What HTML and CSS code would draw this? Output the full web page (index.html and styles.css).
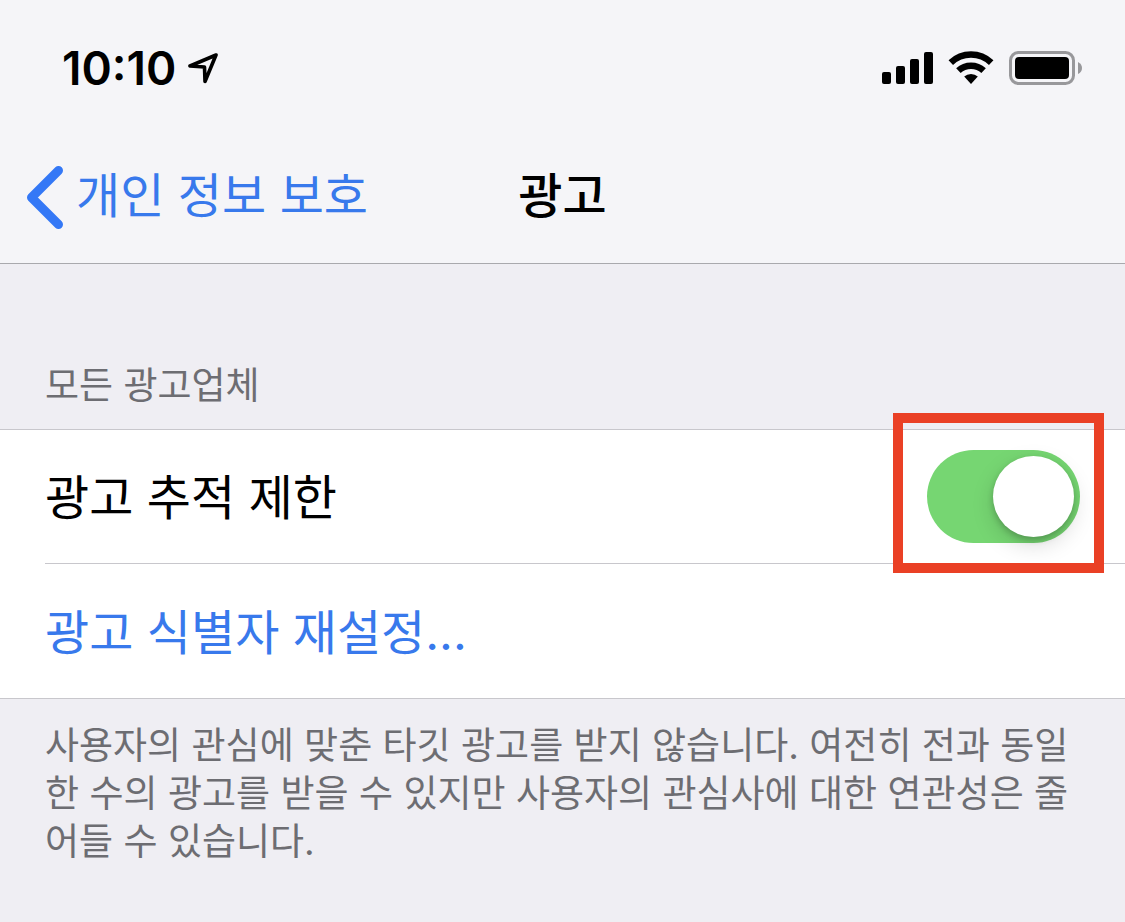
FILE: index.html
```html
<!DOCTYPE html>
<html lang="ko">
<head>
    <meta charset="UTF-8">
    <meta name="viewport" content="width=device-width, initial-scale=1.0">
    <title>광고</title>
    <link rel="stylesheet" href="styles.css">
</head>
<body>

    <header class="header">
        <div class="status-bar">
            <div class="status-left">
                <span class="time">10:10</span>
                <svg class="location" width="30" height="31" viewBox="0 0 30 31" aria-hidden="true">
                    <path d="M28 2 L2 13 L16.500 14 L17 28.500 Z" fill="none" stroke="#000" stroke-width="3.600" stroke-linejoin="round"/>
                </svg>
            </div>
            <div class="status-right">
                <svg width="51" height="34" viewBox="0 0 51 34" aria-hidden="true">
                    <rect x="0" y="21" width="9" height="12" rx="2"/>
                    <rect x="14" y="15" width="9" height="18" rx="2"/>
                    <rect x="28" y="8" width="9" height="25" rx="2"/>
                    <rect x="42" y="1" width="9" height="32" rx="2"/>
                </svg>
                <svg width="46" height="34" viewBox="0 0 46 34" aria-hidden="true">
                    <path d="M2.800 11.700 A29.300 29.300 0 0 1 43.200 11.700" fill="none" stroke="#000" stroke-width="6.500"/>
                    <path d="M10.400 19.700 A18.300 18.300 0 0 1 35.600 19.700" fill="none" stroke="#000" stroke-width="6.500"/>
                    <path d="M16.200 25.600 A10 10 0 0 1 29.800 25.600 L23 33 Z"/>
                </svg>
                <svg width="74" height="34" viewBox="0 0 74 34" aria-hidden="true">
                    <rect x="1.500" y="1.500" width="63" height="31" rx="8" fill="none" stroke="#98989b" stroke-width="3"/>
                    <rect x="6" y="6" width="54" height="22" rx="4"/>
                    <path d="M69 11 Q73 13 73 17 Q73 21 69 23 Z" fill="#98989b"/>
                </svg>
            </div>
        </div>

        <nav class="nav">
            <a class="back" href="#">
                <svg width="38" height="68" viewBox="0 0 38 68" aria-hidden="true">
                    <path d="M32.500 8.500 L5.500 35.500 L32.500 62.500" fill="none" stroke="#3478f6" stroke-width="9" stroke-linecap="round" stroke-linejoin="round"/>
                </svg>
                <span>개인 정보 보호</span>
            </a>
            <h1 class="title">광고</h1>
        </nav>
    </header>

    <main>
        <h2 class="group-title">모든 광고업체</h2>
        <div class="group">
            <div class="row">
                <label for="limit-tracking">광고 추적 제한</label>
                <div class="highlight">
                    <input class="switch" type="checkbox" role="switch" id="limit-tracking" checked>
                </div>
            </div>
            <div class="row">
                <button class="reset" type="button">광고 식별자 재설정...</button>
            </div>
        </div>
        <p class="note">사용자의 관심에 맞춘 타깃 광고를 받지 않습니다. 여전히 전과 동일한 수의 광고를 받을 수 있지만 사용자의 관심사에 대한 연관성은 줄어들 수 있습니다.</p>
    </main>

</body>
</html>
```
FILE: styles.css
```css
* {
    box-sizing: border-box;
}
body {
    margin: 0;
    background-color: #efeef3;
    color: #000;
    font-family: Inter, "Noto Sans CJK KR", sans-serif;
    font-size: 48px;
    line-height: 64px;
}
svg {
    display: block;
    flex: none;
}
.header {
    background-color: #f5f5f8;
    border-bottom: 1px solid #a9a9ad;
}
.status-bar {
    display: flex;
    justify-content: space-between;
    align-items: center;
    height: 132px;
    padding: 4px 42px 0 62px;
}
.status-left {
    display: flex;
    align-items: center;
    gap: 12px;
}
.status-right {
    display: flex;
    align-items: center;
    gap: 15px;
}
.time {
    font-size: 46px;
    font-weight: 600;
}
.nav {
    display: grid;
    grid-template-columns: 1fr auto 1fr;
    align-items: center;
    height: 131px;
    padding: 0 26px 4px;
}
.back {
    display: flex;
    align-items: center;
    gap: 12px;
    color: #3879ec;
    text-decoration: none;
    white-space: nowrap;
}
.title {
    margin: 0;
    font-size: 48px;
    font-weight: 500;
}
.group-title {
    margin: 0;
    padding: 98px 45px 19px;
    color: #6d6d72;
    font-size: 37px;
    font-weight: 400;
    line-height: 48px;
}
.group {
    background-color: #fff;
    border-top: 1px solid #c8c7cc;
    border-bottom: 1px solid #c8c7cc;
}
.row {
    display: flex;
    justify-content: space-between;
    align-items: center;
    height: 134px;
    margin-left: 45px;
    padding-right: 45px;
}
.row:first-child {
    border-bottom: 1px solid #c8c7cc;
}
.row label,
.reset {
    padding: 3px 0 0;
}
.highlight {
    position: relative;
    display: flex;
}
/* red frame around the switch */
.highlight::after {
    content: "";
    position: absolute;
    inset: -37px -24px -30px -34px;
    border: 10px solid #ea4025;
    pointer-events: none;
}
.switch {
    appearance: none;
    display: flex;
    align-items: center;
    width: 153px;
    height: 93px;
    margin: 0;
    padding: 6px;
    border-radius: 47px;
    background-color: #e5e5ea;
    cursor: pointer;
}
.switch::before {
    content: "";
    width: 81px;
    height: 81px;
    border-radius: 50%;
    background-color: #fff;
    box-shadow: 0 8px 22px rgba(0, 0, 0, 0.15), 0 3px 6px rgba(0, 0, 0, 0.2);
}
.switch:checked {
    justify-content: flex-end;
    background-color: #76d672;
}
.reset {
    border: none;
    background: none;
    color: #3879ec;
    font: inherit;
    cursor: pointer;
}
.note {
    margin: 0;
    padding: 23px 45px;
    color: #6d6d72;
    font-size: 37px;
    line-height: 48px;
}
```
